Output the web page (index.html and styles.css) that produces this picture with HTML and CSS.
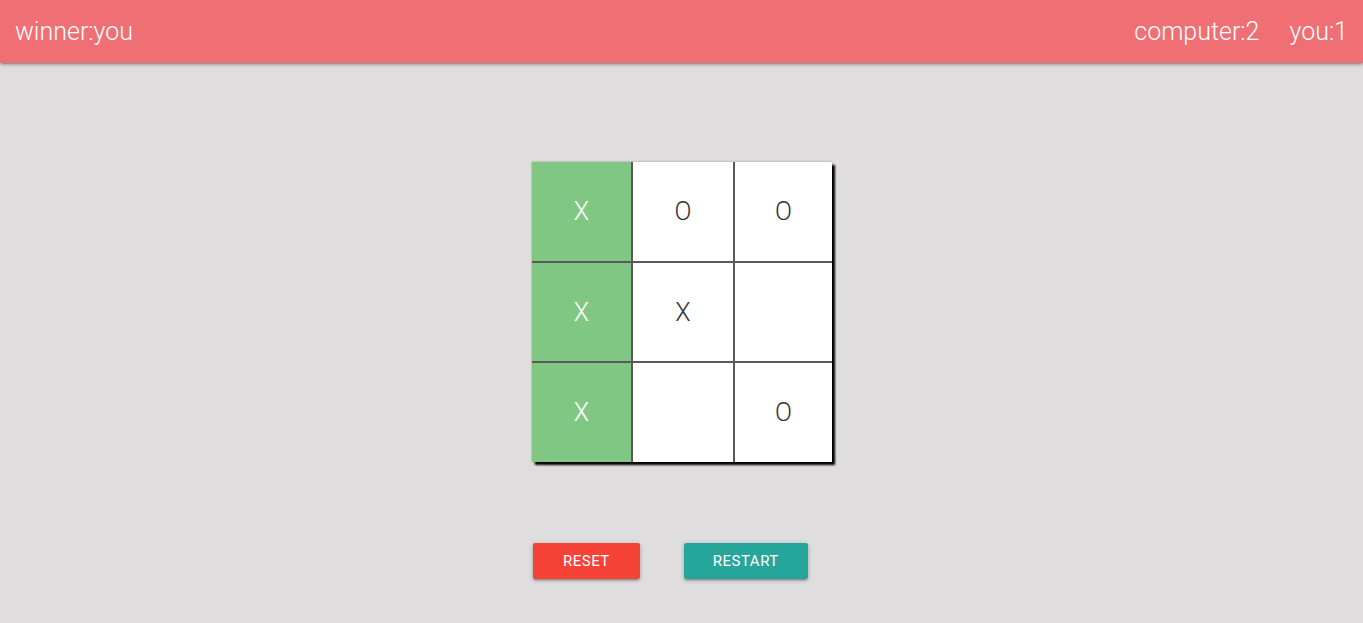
FILE: index.html
```html
<!DOCTYPE html>
<html>
<head>
<meta charset="utf-8">
<link rel="stylesheet" href="styles.css">
</head>
<body>
<header class="nav">
  <div class="winner">winner:you</div>
  <ul class="scores">
    <li>computer:2</li>
    <li>you:1</li>
  </ul>
</header>
<main class="main">
  <div class="board">
    <div class="cell win">X</div>
    <div class="cell">O</div>
    <div class="cell">O</div>
    <div class="cell win">X</div>
    <div class="cell">X</div>
    <div class="cell"></div>
    <div class="cell win">X</div>
    <div class="cell"></div>
    <div class="cell">O</div>
  </div>
  <div class="actions">
    <button class="btn btn-reset">RESET</button>
    <button class="btn btn-restart">RESTART</button>
  </div>
</main>
</body>
</html>
```

FILE: styles.css
```css
html, body {
  margin: 0;
  padding: 0;
}
body {
  background: #dfdddd;
  font-family: Roboto, "Liberation Sans", sans-serif;
  height: 623px;
  overflow: hidden;
}
.nav {
  height: 63px;
  background: #f06f74;
  color: #fff;
  display: flex;
  align-items: center;
  justify-content: space-between;
  box-shadow: 0 2px 2px 0 rgba(0,0,0,.14), 0 3px 1px -2px rgba(0,0,0,.12), 0 1px 5px 0 rgba(0,0,0,.2);
  font-size: 25px;
  font-weight: 300;
  line-height: 63px;
  position: relative;
}
.winner {
  padding-left: 15px;
}
.scores {
  list-style: none;
  margin: 0;
  padding: 0;
  display: flex;
}
.scores li {
  padding: 0 15px;
}
.main {
  display: flex;
  flex-direction: column;
  align-items: center;
  padding-top: 99px;
}
.board {
  width: 300px;
  height: 300px;
  display: grid;
  grid-template-columns: 99px 100px 97px;
  grid-template-rows: 99px 98px 99px;
  gap: 2px;
  background: #5a5a5a;
  box-shadow: 3px 3px 2px #000, 0 0 2px rgba(0,0,0,.35);
  margin-left: 1px;
}
.cell {
  background: #fff;
  color: #333;
  display: flex;
  align-items: center;
  justify-content: center;
  font-size: 25px;
  font-weight: 300;
}
.cell.win {
  background: #81c784;
  color: #fff;
}
.actions {
  width: 300px;
  display: flex;
  gap: 44px;
  margin-top: 81px;
  margin-left: 3px;
}
.btn {
  height: 36px;
  border: none;
  border-radius: 2px;
  padding: 0 30px;
  color: #fff;
  font-family: Roboto, "Liberation Sans", sans-serif;
  font-size: 15px;
  letter-spacing: .5px;
  box-shadow: 0 2px 2px 0 rgba(0,0,0,.14), 0 3px 1px -2px rgba(0,0,0,.12), 0 1px 5px 0 rgba(0,0,0,.2);
}
.btn-reset {
  background: #f44336;
}
.btn-restart {
  background: #26a69a;
  padding: 0 29px;
}
```
